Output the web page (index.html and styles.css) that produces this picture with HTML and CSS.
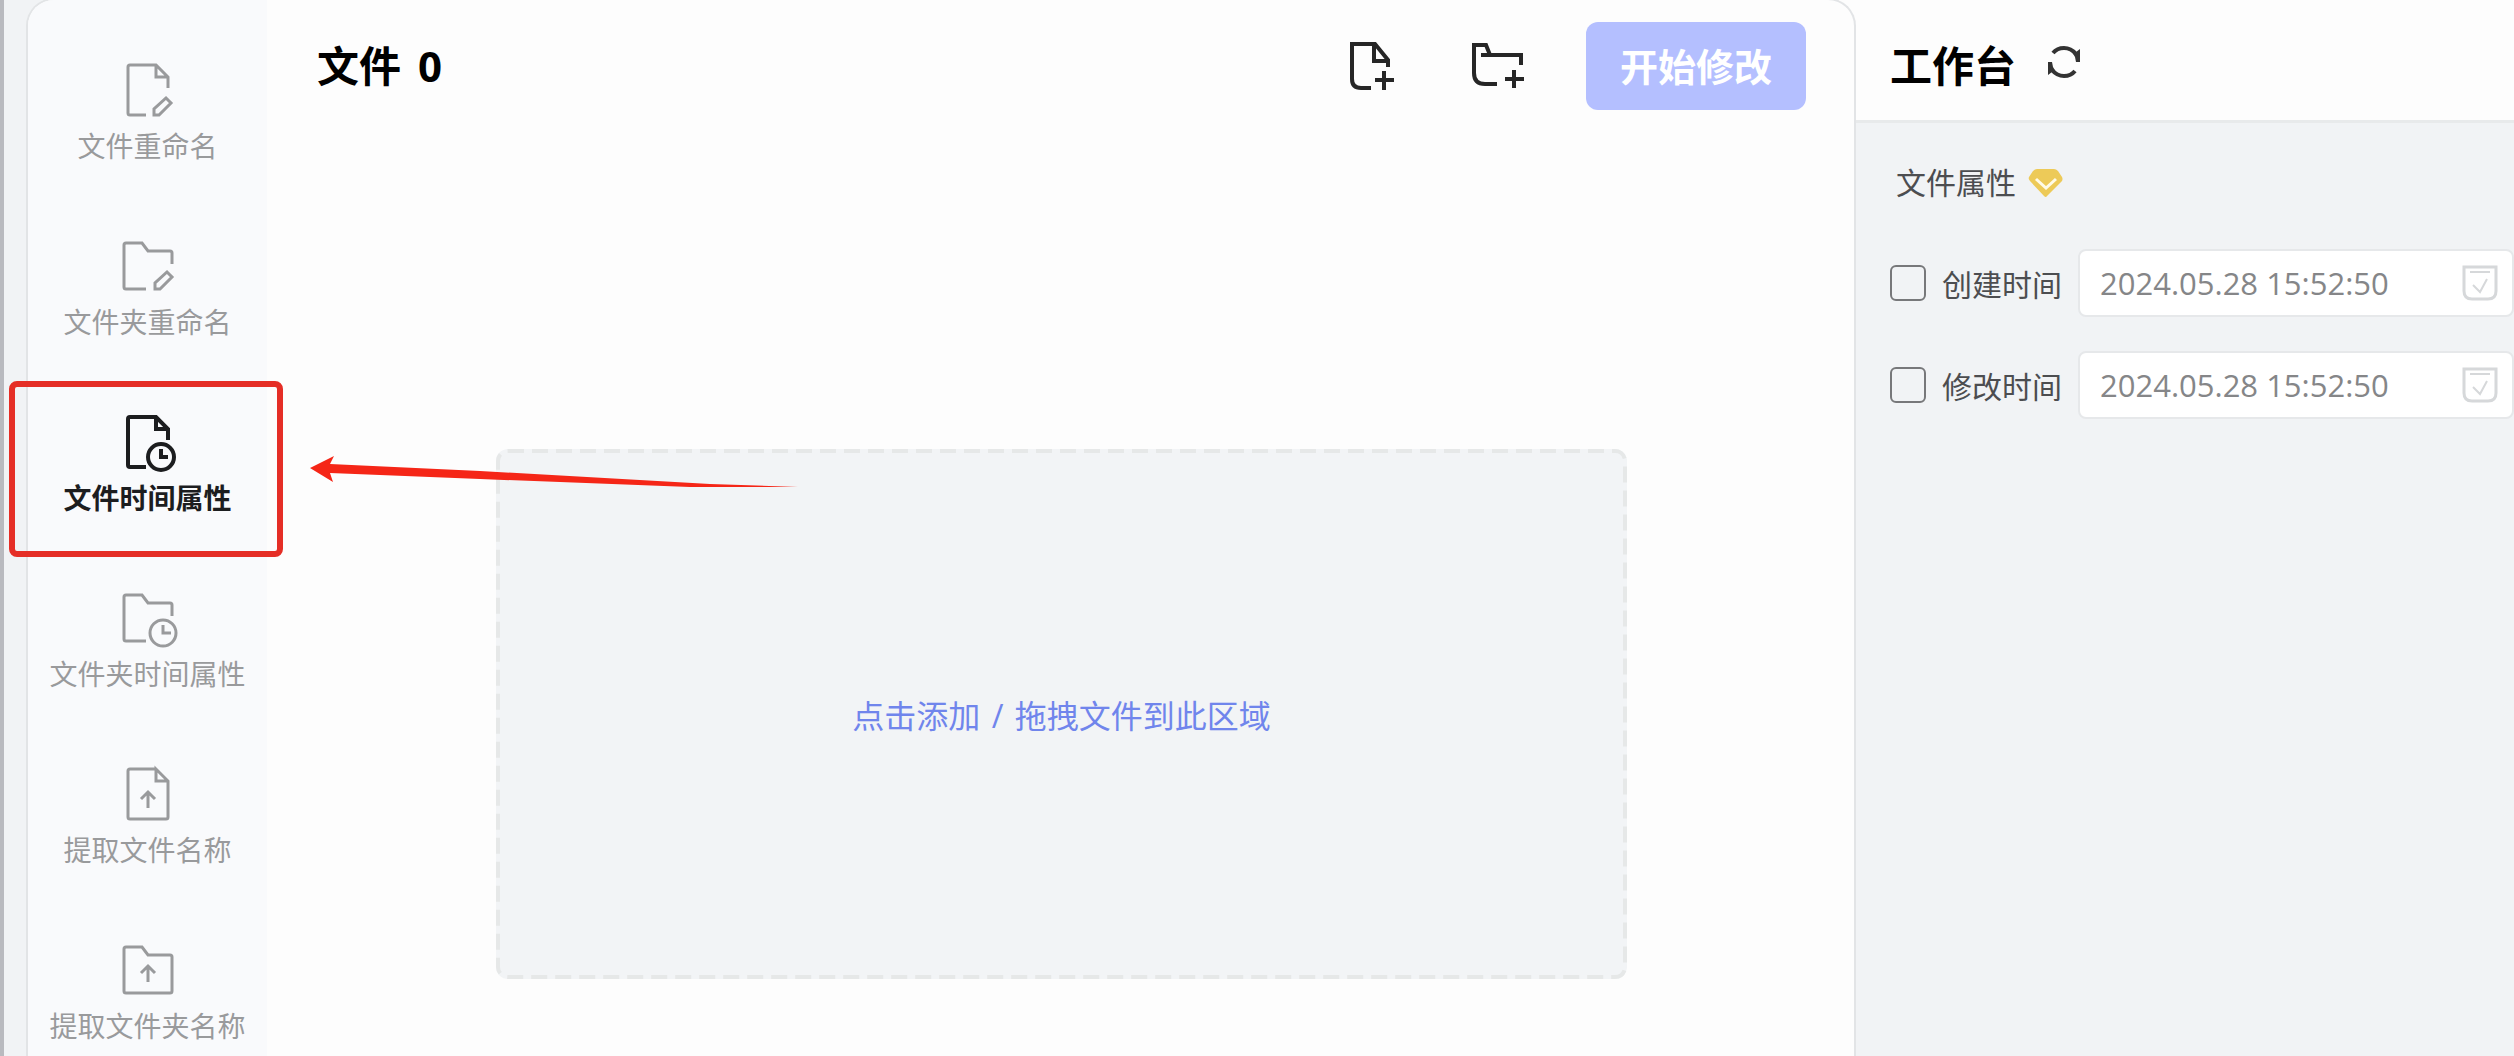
FILE: index.html
```html
<!DOCTYPE html>
<html lang="zh-CN">
<head>
<meta charset="utf-8">
<meta name="viewport" content="width=device-width, initial-scale=1">
<title>文件时间属性</title>
<link rel="stylesheet" href="styles.css">
</head>
<body>
<div class="app">
  <div class="card">
    <nav class="sidebar">
      <button class="nav-item" type="button">
        <svg class="nav-icon" viewBox="1 0 60 60" aria-hidden="true">
          <path d="M51 28V17L39 5H13Q11 5 11 7V53Q11 55 13 55H29M39 5V17H51"/>
          <path d="M37 55V49L49 38L54 43L42 55Z"/>
        </svg>
        <span>文件重命名</span>
      </button>
      <button class="nav-item" type="button">
        <svg class="nav-icon" viewBox="1 0 60 60" aria-hidden="true">
          <path d="M55 28V17Q55 15 53 15H31L25 7H9Q7 7 7 9V51Q7 53 9 53H29"/>
          <path d="M38 53V47L50 36L55 41L43 53Z"/>
        </svg>
        <span>文件夹重命名</span>
      </button>
      <button class="nav-item nav-item-active" type="button">
        <svg class="nav-icon" viewBox="1 0 60 60" aria-hidden="true">
          <path d="M51 28V17L39 5H13Q11 5 11 7V53Q11 55 13 55H29M39 5V17H51"/>
          <circle cx="44" cy="45" r="13"/>
          <path d="M44 37V45H51"/>
        </svg>
        <span>文件时间属性</span>
        <span class="highlight"></span>
        <svg class="pointer" viewBox="0 0 488 34" aria-hidden="true">
          <path d="M0 13L24 1L20 9L170 16L400 29L488 32L380 32L170 24L20 18L23 27Z"/>
        </svg>
      </button>
      <button class="nav-item" type="button">
        <svg class="nav-icon" viewBox="1 0 60 60" aria-hidden="true">
          <path d="M55 28V17Q55 15 53 15H31L25 7H9Q7 7 7 9V51Q7 53 9 53H29"/>
          <circle cx="46" cy="45" r="13"/>
          <path d="M46 37V45H54"/>
        </svg>
        <span>文件夹时间属性</span>
      </button>
      <button class="nav-item" type="button">
        <svg class="nav-icon" viewBox="1 0 60 60" aria-hidden="true">
          <path d="M39 5H13Q11 5 11 7V53Q11 55 13 55H49Q51 55 51 53V17L39 5V17H51"/>
          <path d="M31 44V28M24 35L31 28L38 35"/>
        </svg>
        <span>提取文件名称</span>
      </button>
      <button class="nav-item" type="button">
        <svg class="nav-icon" viewBox="1 0 60 60" aria-hidden="true">
          <path d="M25 7H9Q7 7 7 9V51Q7 53 9 53H53Q55 53 55 51V17Q55 15 53 15H31Z"/>
          <path d="M31 42V26M24 33L31 26L38 33"/>
        </svg>
        <span>提取文件夹名称</span>
      </button>
    </nav>

    <main class="main">
      <header class="main-header">
        <h1 class="title">文件 <span class="count">0</span></h1>
        <div class="actions">
          <button class="icon-button" type="button" aria-label="添加文件">
            <svg viewBox="0 0 64 64" aria-hidden="true">
              <path d="M42 33V26L29 10H6V45Q6 54 15 54H25M28 10V27H42M38 37V56M29 46H48"/>
            </svg>
          </button>
          <button class="icon-button" type="button" aria-label="添加文件夹">
            <svg viewBox="0 0 64 64" aria-hidden="true">
              <path d="M31 50H19Q8 50 8 39V11H20L24 21M15 21H55V31M48 36V54M39 45H58"/>
            </svg>
          </button>
          <button class="start-button" type="button">开始修改</button>
        </div>
      </header>
      <button class="dropzone" type="button">
        <svg class="dropzone-outline" aria-hidden="true"><rect x="2" y="2" rx="10"/></svg>
        点击添加<span class="slash"> / </span>拖拽文件到此区域
      </button>
    </main>
  </div>

  <aside class="panel">
    <header class="panel-header">
      <h2 class="title">工作台</h2>
      <button class="refresh" type="button" aria-label="刷新">
        <svg viewBox="0 0 32 32" aria-hidden="true">
          <path d="M5 7Q9 2 16 2Q23 2 28 8M27 25Q23 30 16 30Q9 30 4 24"/>
          <path class="solid" d="M32 3V16H28L27 11L24 6L28 6ZM0 29V16H4L5 21L8 26L4 26Z"/>
        </svg>
      </button>
    </header>
    <form class="panel-body">
      <h3 class="section-title">文件属性
        <svg class="gem" viewBox="0 0 36 30" aria-hidden="true">
          <path d="M9 1H26Q28 1 30 3L34 9Q35 11 34 13L19 28Q18 30 16 28L2 13Q0 11 1 9L5 3Q7 1 9 1Z"/>
          <path class="gem-mark" d="M8 11L18 20L28 11"/>
        </svg>
      </h3>
      <div class="row">
        <input class="check" type="checkbox" id="use-created">
        <label for="use-created">创建时间</label>
        <div class="field">
          <input class="field-input" type="text" value="2024.05.28 15:52:50" aria-label="创建时间">
          <svg class="calendar" viewBox="0 0 36 36" aria-hidden="true">
            <path d="M2 2H34V26Q34 34 26 34H10Q2 34 2 26Z"/>
            <path class="thin" d="M8 7H28M11 20L18 27L25 14"/>
          </svg>
        </div>
      </div>
      <div class="row">
        <input class="check" type="checkbox" id="use-modified">
        <label for="use-modified">修改时间</label>
        <div class="field">
          <input class="field-input" type="text" value="2024.05.28 15:52:50" aria-label="修改时间">
          <svg class="calendar" viewBox="0 0 36 36" aria-hidden="true">
            <path d="M2 2H34V26Q34 34 26 34H10Q2 34 2 26Z"/>
            <path class="thin" d="M8 7H28M11 20L18 27L25 14"/>
          </svg>
        </div>
      </div>
    </form>
  </aside>
</div>
</body>
</html>
```

FILE: styles.css
```css
* {
  box-sizing: border-box;
}

body {
  margin: 0;
  font-family: "Open Sans", "Noto Sans CJK SC", sans-serif;
  background: #f1f3f5;
}

button,
input {
  font: inherit;
  color: inherit;
}

button {
  padding: 0;
  border: 0;
  background: none;
  cursor: pointer;
}

h1,
h2,
h3 {
  margin: 0;
}

.app {
  display: flex;
  min-height: 100vh;
  padding-left: 22px;
  border-left: 4px solid #b9babf;
  overflow: hidden;
}

.card {
  position: relative;
  z-index: 1;
  display: flex;
  flex: 1;
  min-width: 0;
  margin-top: -2px;
  border: 2px solid #e2e4e6;
  border-bottom: 0;
  border-radius: 28px 28px 0 0;
  background: #fdfdfd;
}

/* Sidebar */

.sidebar {
  display: flex;
  flex: 0 0 239px;
  flex-direction: column;
  gap: 70px;
  padding: 60px 0 10px;
  border-top-left-radius: 26px;
  background: #f9fafc;
}

.nav-item {
  position: relative;
  display: flex;
  flex-direction: column;
  align-items: center;
  gap: 6px;
  font-size: 28px;
  line-height: 40px;
  color: #999a9c;
}

.nav-item-active {
  z-index: 1;
  font-weight: 700;
  color: #1c1d1f;
}

.nav-icon {
  width: 60px;
  height: 60px;
  fill: none;
  stroke: currentColor;
  stroke-width: 3;
}

.nav-item-active .nav-icon {
  stroke-width: 4;
}

.highlight {
  position: absolute;
  inset: -31px -16px -39px -19px;
  border: 6px solid #e52e26;
  border-radius: 8px;
  pointer-events: none;
}

.pointer {
  position: absolute;
  top: 43px;
  left: 282px;
  width: 488px;
  height: 34px;
  fill: #f52617;
  pointer-events: none;
}

/* File area */

.main {
  flex: 1;
  min-width: 0;
  padding-left: 2px;
}

.main-header {
  display: flex;
  align-items: center;
  justify-content: space-between;
  padding: 22px 48px 0;
}

.title {
  font-size: 42px;
  line-height: 60px;
  font-weight: 700;
  color: #000;
}

.count {
  margin-left: 6px;
}

.actions {
  display: flex;
  align-items: center;
  gap: 56px;
}

.icon-button {
  width: 64px;
  height: 64px;
}

.icon-button svg {
  display: block;
  fill: none;
  stroke: #262626;
  stroke-width: 4;
}

.start-button {
  width: 220px;
  height: 88px;
  border-radius: 12px;
  background: #b4bfff;
  color: #fff;
  font-size: 38px;
  line-height: 84px;
  font-weight: 700;
}

.dropzone {
  position: relative;
  display: block;
  width: calc(100% - 454px);
  height: 530px;
  margin: 339px auto 0;
  border-radius: 12px;
  background: #f2f4f6;
  color: #7085ec;
  font-size: 32px;
}

.dropzone-outline {
  position: absolute;
  inset: 0;
  width: 100%;
  height: 100%;
}

.dropzone-outline rect {
  width: calc(100% - 4px);
  height: calc(100% - 4px);
  fill: none;
  stroke: #e6e8e8;
  stroke-width: 4;
  stroke-dasharray: 16 8;
}

.slash {
  margin: 0 3px;
}

/* Workbench panel */

.panel {
  flex: 0 0 682px;
  margin-left: -24px;
}

.panel-header {
  display: flex;
  align-items: flex-start;
  gap: 32px;
  height: 123px;
  padding: 36px 0 0 58px;
  border-bottom: 3px solid #e8eaeb;
  background: #fdfdfd;
}

.refresh {
  width: 32px;
  height: 32px;
  margin-top: 10px;
}

.refresh svg {
  display: block;
  fill: none;
  stroke: #333;
  stroke-width: 4;
}

.refresh .solid {
  fill: #333;
  stroke: none;
}

.panel-body {
  padding: 38px 0 0 58px;
  font-size: 30px;
  color: #4c4d50;
}

.section-title {
  display: flex;
  align-items: center;
  gap: 12px;
  margin-bottom: 44px;
  padding-left: 6px;
  font-size: 30px;
  line-height: 44px;
  font-weight: 400;
}

.gem {
  width: 36px;
  height: 30px;
  fill: #edca58;
}

.gem-mark {
  fill: none;
  stroke: #fffbe8;
  stroke-width: 3;
}

.row {
  display: flex;
  align-items: center;
  gap: 16px;
  margin-bottom: 34px;
}

.check {
  appearance: none;
  width: 36px;
  height: 36px;
  margin: 0;
  border: 2px solid #77787a;
  border-radius: 6px;
}

.check:checked {
  background: #6b7ff0;
}

.field {
  display: flex;
  flex: 1;
  align-items: center;
  min-width: 0;
  height: 68px;
  padding: 0 14px 0 20px;
  border: 2px solid #e6e8ea;
  border-radius: 8px;
  background: #fff;
}

.field-input {
  flex: 1;
  min-width: 0;
  padding: 0;
  border: 0;
  outline: 0;
  background: none;
  color: #858688;
  font-size: 31px;
}

.calendar {
  width: 36px;
  height: 36px;
  fill: none;
  stroke: #d6d8da;
  stroke-width: 3;
}

.calendar .thin {
  stroke-width: 2;
}
```
